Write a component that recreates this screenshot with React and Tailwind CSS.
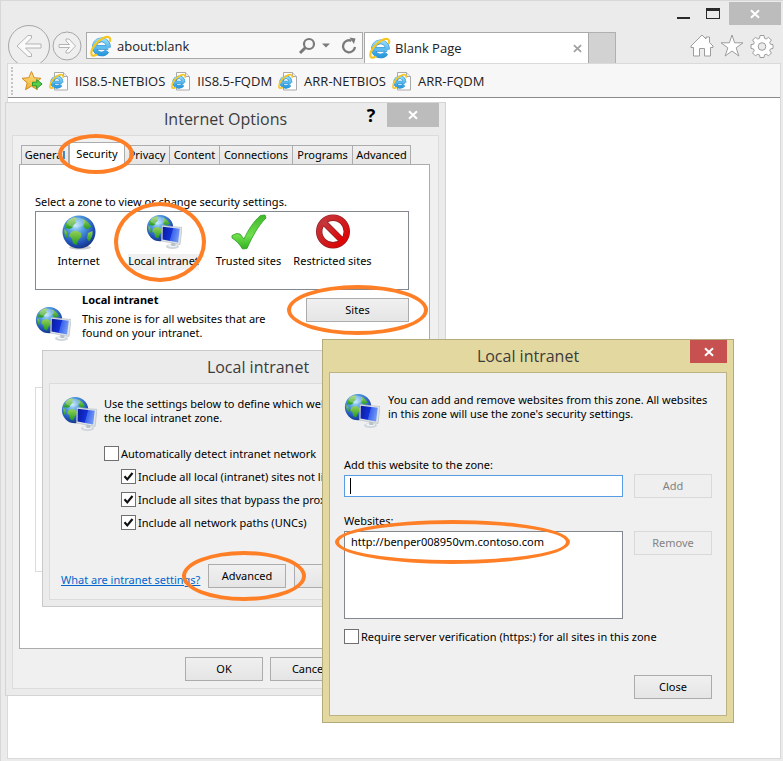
import React from "react";

const UI = "font-['Noto_Sans','DejaVu_Sans_Condensed',sans-serif] text-[11px] leading-[14px] text-black";

function Defs() {
  return (
    <svg width="0" height="0" className="absolute" aria-hidden="true">
      <defs>
        <radialGradient id="ocean" cx="0.4" cy="0.3" r="0.75">
          <stop offset="0" stopColor="#b9e4fb" />
          <stop offset="0.35" stopColor="#4f9be0" />
          <stop offset="0.75" stopColor="#1f4fb4" />
          <stop offset="1" stopColor="#14307c" />
        </radialGradient>
        <linearGradient id="land" x1="0" y1="0" x2="0" y2="1">
          <stop offset="0" stopColor="#9ad25a" />
          <stop offset="1" stopColor="#1f9a1c" />
        </linearGradient>
        <linearGradient id="screen" x1="0" y1="0" x2="1" y2="0.25">
          <stop offset="0" stopColor="#0a1a9a" />
          <stop offset="0.58" stopColor="#1230d8" />
          <stop offset="0.62" stopColor="#3a63ea" />
          <stop offset="1" stopColor="#6e95f4" />
        </linearGradient>
        <linearGradient id="ie" x1="0" y1="0" x2="0" y2="1">
          <stop offset="0" stopColor="#8edbfa" />
          <stop offset="1" stopColor="#2b9be0" />
        </linearGradient>
        <linearGradient id="tick" x1="0" y1="0" x2="0" y2="1">
          <stop offset="0" stopColor="#3fb52c" />
          <stop offset="0.6" stopColor="#6fe04c" />
          <stop offset="1" stopColor="#33b022" />
        </linearGradient>
        <linearGradient id="stop" x1="0" y1="0" x2="1" y2="1">
          <stop offset="0" stopColor="#c23a3f" />
          <stop offset="1" stopColor="#e00000" />
        </linearGradient>
        <linearGradient id="gold" x1="0" y1="0" x2="0" y2="1">
          <stop offset="0" stopColor="#ffe58a" />
          <stop offset="1" stopColor="#f2ab2c" />
        </linearGradient>
      </defs>
    </svg>
  );
}

function IeLogo({ className = "size-[22px]" }) {
  return (
    <svg viewBox="0 0 20 20" className={className} aria-hidden="true">
      <path d="M16.6 11.2H5.2M16.8 11.2A6.4 6.4 0 1 0 15.6 14.6" fill="none" stroke="#2c8ccf" strokeWidth="4.200" />
      <path d="M16.4 11.2H5.2M16.6 11.2A6.4 6.4 0 1 0 15.4 14.4" fill="none" stroke="url(#ie)" strokeWidth="3.200" />
      <path d="M16.4 11.2H6" stroke="#5cbcf0" strokeWidth="2.600" />
      <path d="M18.200 5.400C19 2.400 17 .6 12.600 2.600 6.600 5.400 1.200 12 1.200 16.600c0 2.600 2.200 2.600 4.600 1.400" fill="none" stroke="#f7c623" strokeWidth="2" strokeLinecap="round" />
    </svg>
  );
}

function PageIcon() {
  return (
    <svg viewBox="0 0 20 20" className="size-5 shrink-0" aria-hidden="true">
      <path d="M5.500 1.500h9l4 4v13.500h-13z" fill="#fff" stroke="#a9a9a9" />
      <path d="M14.500 1.500v4h4" fill="#eee" stroke="#a9a9a9" />
      <g transform="translate(0 3) scale(.76)">
        <path d="M16.600 11.200H5.200M16.800 11.200A6.400 6.400 0 1 0 15.600 14.600" fill="none" stroke="#2c8ccf" strokeWidth="4.600" />
        <path d="M16.400 11.200H5.200M16.600 11.200A6.400 6.400 0 1 0 15.400 14.400" fill="none" stroke="url(#ie)" strokeWidth="3.200" />
        <path d="M18.600 4C19 .6 16 0 12 2 6.400 4.800 1.200 11 1.200 16.400c0 2.600 2.200 2.600 4.600 1.400" fill="none" stroke="#f7c623" strokeWidth="2.200" strokeLinecap="round" />
      </g>
    </svg>
  );
}

function AddFavorite() {
  return (
    <svg viewBox="0 0 22 22" className="size-[22px]" aria-hidden="true">
      <path d="M10.500 1.500l2.600 6.200 6.900.6-5.200 4.600 1.500 6.800-5.800-3.600-6 3.600 1.700-6.800L1 8.300l6.800-.6z" fill="url(#gold)" stroke="#d58c22" strokeLinejoin="round" />
      <path d="M11.500 12.200h4.200V9.600l5.400 4.400-5.400 4.600v-2.800h-4.200z" fill="#56cf4b" stroke="#2a9a2c" />
    </svg>
  );
}

const LAND = (
  <g fill="url(#land)">
    <path d="M4 9c2-4 6-6.500 9-6.800l2 1.600-2 2.200 1.500 1.500-3 2.500-1.500 3-3 1-2.500-1-1.500 1z" />
    <path d="M20 3.500c4 1.500 8 5.500 9.500 9l-2.500-.5-1 2.500-3-1-2-3.500 1-3z" />
    <path d="M9 17l5-1.500 5 2.500.5 3.500-3 3.500-2 5-3.500-1.500-1-5-3-2.500z" />
    <path d="M26 18l4.500-2c.5 4-1 8-3.500 10.500l-2-3z" />
    <path d="M2.500 14l2.500 3 .5 5.500-1.500.5c-1.500-3-2-6-1.500-9z" />
  </g>
);

function Globe() {
  return (
    <svg viewBox="0 0 36 36" className="size-9" aria-hidden="true">
      <ellipse cx="19" cy="33.500" rx="11" ry="2" fill="#c9c9c9" />
      <g transform="translate(1 1)">
        <circle cx="17" cy="17" r="16.500" fill="url(#ocean)" />
        {LAND}
        <ellipse cx="14" cy="7.500" rx="9" ry="5" fill="#fff" opacity=".25" />
      </g>
    </svg>
  );
}

function Intranet() {
  return (
    <svg viewBox="0 0 36 36" className="size-9 shrink-0" aria-hidden="true">
      <g transform="translate(.5 .5) scale(.8)">
        <circle cx="17" cy="17" r="16.500" fill="url(#ocean)" />
        {LAND}
        <ellipse cx="14" cy="7.500" rx="9" ry="5" fill="#fff" opacity=".25" />
      </g>
      <ellipse cx="26.500" cy="32.500" rx="6.500" ry="2.400" fill="#cfd6db" />
      <ellipse cx="26.500" cy="31.800" rx="4.500" ry="1.400" fill="#f0f3f5" />
      <path d="M25 28h4l.5 4h-4z" fill="#b9c3ca" />
      <path d="M16 11.500l20 2-2 17-18.500-3.500z" fill="#dfe4e8" stroke="#aeb6bc" strokeWidth=".6" />
      <path d="M16.800 12.800l17 1.900-1.700 13.800-15.600-3z" fill="url(#screen)" />
    </svg>
  );
}

function Trusted() {
  return (
    <svg viewBox="0 0 36 36" className="size-9" aria-hidden="true">
      <path d="M1 21.500l4.500-2 3.500.5 4 5C17 16 23 7 29.500 1.500l4.500-.5 1 3C27 12 21 23 16 34.500l-4.500.5C8.500 30 5 26.500 1 24z" fill="url(#tick)" stroke="#2c9a22" strokeWidth=".8" />
    </svg>
  );
}

function Restricted() {
  return (
    <svg viewBox="0 0 36 36" className="size-9" aria-hidden="true">
      <circle cx="18" cy="17.500" r="13.800" fill="#fff" stroke="#8f1b1f" strokeWidth="6.400" />
      <path d="M8.500 8l19 19" stroke="#8f1b1f" strokeWidth="6.200" />
      <circle cx="18" cy="17.500" r="13.800" fill="none" stroke="url(#stop)" strokeWidth="5.200" />
      <path d="M8.500 8l19 19.010" stroke="url(#stop)" strokeWidth="5" />
    </svg>
  );
}

function Cross({ className }) {
  return (
    <svg viewBox="0 0 10 10" className={className} aria-hidden="true">
      <path d="M1 1.200l8 7.600M9 1.200L1 8.800" stroke="currentColor" strokeWidth="2" />
    </svg>
  );
}

function Ring({ className }) {
  return <span aria-hidden="true" className={`pointer-events-none absolute z-10 rounded-[50%] border-4 border-[#ff7f27] ${className}`} />;
}

function Button({ children, disabled, className = "w-[78px]" }) {
  return (
    <button
      type="button"
      disabled={disabled}
      className={`relative h-6 shrink-0 border border-[#acacac] bg-linear-to-b from-[#f0f0f0] to-[#e5e5e5] disabled:border-[#d9d9d9] disabled:from-[#efefef] disabled:to-[#efefef] disabled:text-[#838383] ${className}`}
    >
      {children}
    </button>
  );
}

function Check({ id, label, checked }) {
  return (
    <div className="flex items-center gap-0.5">
      <span className="relative">
        <input id={id} type="checkbox" defaultChecked={checked} className="peer block size-[15px] appearance-none border border-[#707070] bg-white" />
        <svg viewBox="0 0 15 15" className="pointer-events-none absolute inset-0 hidden size-[15px] peer-checked:block" aria-hidden="true">
          <path d="M3.500 7.200l2.800 3.200 5.200-6.400" fill="none" stroke="#111" strokeWidth="2.200" />
        </svg>
      </span>
      <label htmlFor={id} className="whitespace-nowrap">{label}</label>
    </div>
  );
}

function Dialog({ title, place, frame, inner, head = "h-8", controls, children }) {
  return (
    <section role="dialog" aria-label={title} className={`absolute flex flex-col border px-1.5 pb-1.5 ${place} ${frame} ${UI}`}>
      <header className={`relative flex items-center justify-center ${head}`}>
        <h2 className="font-['Open_Sans',sans-serif] text-base text-[#3c3c3c]">{title}</h2>
        <div className="absolute top-0 right-0 flex">{controls}</div>
      </header>
      <div className={`flex flex-1 flex-col border bg-[#f0f0f0] ${inner}`}>{children}</div>
    </section>
  );
}

const TABS = ["General", "Security", "Privacy", "Content", "Connections", "Programs", "Advanced"];
const ZONES = [
  ["Internet", Globe],
  ["Local intranet", Intranet],
  ["Trusted sites", Trusted],
  ["Restricted sites", Restricted],
];

function InternetOptions() {
  return (
    <Dialog
      title="Internet Options"
      place="left-[5px] top-[102px] w-[441px]"
      frame="border-[#d4d4d4] bg-[#ebebeb]"
      inner="border-[#dcdcdc] pt-1.5 pr-2 pb-[7px] pl-1.5"
      controls={
        <>
          <button type="button" aria-label="Help" className="h-6 w-8 font-['Open_Sans',sans-serif] text-lg leading-6 font-bold">?</button>
          <button type="button" aria-label="Close" className="flex h-6 w-[52px] items-center justify-center bg-[#bcbcbc] text-white">
            <Cross className="size-[10px]" />
          </button>
        </>
      }
    >
      <div role="tablist" className="grid h-[22px] grid-cols-[48px_56px_45px_50px_73px_60px_58px] items-end pl-0.5">
        {TABS.map((t) =>
          t === "Security" ? (
            <button key={t} type="button" role="tab" aria-selected="true" className="relative z-10 -mb-px h-[23px] self-end border border-b-0 border-[#acacac] bg-white">
              {t}
              <Ring className="-inset-y-[9px] -right-2.5 -left-3" />
            </button>
          ) : (
            <button key={t} type="button" role="tab" aria-selected="false" className="h-[19px] border border-b-0 border-l-0 border-[#acacac] bg-linear-to-b from-[#f0f0f0] to-[#e5e5e5] first:border-l">
              {t}
            </button>
          ),
        )}
      </div>
      <div role="tabpanel" className="border border-[#acacac] bg-white pt-[30px] pr-5 pb-[76px] pl-[15px]">
        <p className="h-4">Select a zone to view or change security settings.</p>
        <div role="listbox" aria-label="Zones" className="grid h-[79px] grid-cols-[85px_85px_85px_83px] items-start border border-[#828790] pt-0.5">
          {ZONES.map(([name, Icon]) => (
            <div key={name} role="option" aria-selected={name === "Local intranet"} className="relative flex flex-col items-center gap-1 whitespace-nowrap">
              <Icon />
              <span className={name === "Local intranet" ? "bg-[#f0f0f0] pb-0.5" : "pb-0.5"}>{name}</span>
              {name === "Local intranet" && <Ring className="-top-[12px] right-0 -bottom-[12px] -left-[7px]" />}
            </div>
          ))}
        </div>
        <div className="flex items-start gap-[11px] pt-0.5">
          <div className="pt-[14px]"><Intranet /></div>
          <div className="flex-1">
            <h3 className="mb-1 leading-4 font-bold">Local intranet</h3>
            <p>This zone is for all websites that are<br />found on your intranet.</p>
          </div>
          <div className="pt-1.5">
            <Button className="w-[103px]">
              Sites
              <Ring className="-inset-x-5 -inset-y-[14px]" />
            </Button>
          </div>
        </div>
        <div className="mt-[45px] h-[185px] border border-[#dcdcdc]" />
      </div>
      <div className="mt-2 flex gap-[7px] pl-[166px]">
        <Button>OK</Button>
        <Button>Cancel</Button>
      </div>
    </Dialog>
  );
}

function IntranetSettings() {
  return (
    <Dialog
      title="Local intranet"
      place="left-[42px] top-[350px] w-[432px]"
      frame="border-[#c9c9c9] bg-[#ebebeb]"
      inner="border-[#dcdcdc] px-[11px] pt-3 pb-[11px]"
    >
      <div className="flex gap-[7px]">
        <Intranet />
        <p className="pt-px">Use the settings below to define which websites are included in<br />the local intranet zone.</p>
      </div>
      <div className="mt-[14px] flex flex-col gap-2 pl-[43px]">
        <Check id="auto" label="Automatically detect intranet network" />
        <div className="flex flex-col gap-2 pl-[17px]">
          <Check id="local" checked label="Include all local (intranet) sites not listed" />
          <Check id="proxy" checked label="Include all sites that bypass the proxy server" />
          <Check id="unc" checked label="Include all network paths (UNCs)" />
        </div>
      </div>
      <div className="mt-[34px] flex items-center gap-2">
        <a href="#help" className="w-[139px] pt-2 whitespace-nowrap text-[#0066cc] underline">What are intranet settings?</a>
        <Button>
          Advanced
          <Ring className="-inset-y-[14px] -right-[21px] -left-[27px]" />
        </Button>
        <Button>OK</Button>
      </div>
    </Dialog>
  );
}

function IntranetSites() {
  return (
    <Dialog
      title="Local intranet"
      place="left-[322px] top-[339px] w-[412px]"
      frame="border-[#b3ab7c] bg-[#e3d9a0]"
      inner="border-[#bcb383] px-[14px] pt-5 pb-4"
      controls={
        <button type="button" aria-label="Close" className="flex h-[23px] w-[37px] items-center justify-center bg-[#c75050] text-white">
          <Cross className="size-[10px]" />
        </button>
      }
    >
      <div className="flex gap-2">
        <Intranet />
        <p>You can add and remove websites from this zone. All websites<br />in this zone will use the zone's security settings.</p>
      </div>
      <label htmlFor="site" className="mt-[29px]">Add this website to the zone:</label>
      <div className="mt-0.5 flex items-center gap-[11px]">
        <div className="relative flex-1">
          <input id="site" type="text" className="block h-[22px] w-full border border-[#569de5] bg-white px-1.5 outline-none" />
          <span className="absolute top-[3px] left-1.5 h-4 w-px bg-black" />
        </div>
        <Button disabled>Add</Button>
      </div>
      <h3 className="mt-4">Websites:</h3>
      <div className="mt-[3px] flex items-start gap-[11px]">
        <ul aria-label="Websites" className="h-[88px] flex-1 border border-[#828790] bg-white px-1.5 pt-[3px]">
          <li className="relative w-[195px]">
            http://benper008950vm.contoso.com
            <Ring className="-inset-y-[15px] -right-[24px] -left-4" />
          </li>
        </ul>
        <Button disabled>Remove</Button>
      </div>
      <div className="mt-[10px]">
        <Check id="https" label="Require server verification (https:) for all sites in this zone" />
      </div>
      <div className="mt-[31px] flex justify-end">
        <Button>Close</Button>
      </div>
    </Dialog>
  );
}

const FAVORITES = ["IIS8.5-NETBIOS", "IIS8.5-FQDM", "ARR-NETBIOS", "ARR-FQDM"];

function Browser() {
  return (
    <div className="flex min-h-screen flex-col border-t border-l border-[#d8d8d8] bg-[#ebebeb] font-['Open_Sans',sans-serif] text-[13px] leading-[18px] text-[#222]">
      <div className="flex h-[31px] items-start justify-end pt-px pr-0.5">
        <button type="button" aria-label="Minimize" className="flex h-[23px] w-[30px] justify-center pt-[15px]">
          <span className="h-0.5 w-[13px] bg-[#2a2a2a]" />
        </button>
        <button type="button" aria-label="Maximize" className="flex h-[23px] w-[30px] justify-center pt-1.5">
          <span className="h-[11px] w-[14px] border border-t-[3px] border-[#2a2a2a]" />
        </button>
        <button type="button" aria-label="Close" className="ml-px flex h-[23px] w-[52px] items-center justify-center bg-[#bcbcbc] text-white">
          <Cross className="size-[10px]" />
        </button>
      </div>
      <div className="flex h-[31px] pl-[7px]">
        <div className="flex h-[31px] w-[78px] items-start">
          <svg viewBox="0 0 78 38" className="-mt-[7px] h-[38px] w-[78px]" aria-hidden="true">
            <g fill="#efefef" stroke="#a6a6a6">
              <circle cx="21" cy="21" r="20.500" />
              <circle cx="59" cy="21" r="14" />
            </g>
            <g fill="#fafafa" stroke="#b4b4b4" strokeLinejoin="round">
              <path d="M9 21l11-10.500h3.500v2.500L17.500 19H33v4H17.500l6 6v2.500H20z" />
              <path d="M67.500 21l-6.500-7h-3v2l3.500 3.500H51v3h10.500L58 26v2h3z" />
            </g>
          </svg>
        </div>
        <div className="flex h-[27px] w-[277px] items-center border border-[#a9a9a9] bg-[#f8f8f8] pr-1 pl-[3px]">
          <IeLogo />
          <input aria-label="Address" defaultValue="about:blank" className="ml-[5px] w-0 flex-1 bg-transparent outline-none" />
          <button type="button" aria-label="Search" className="w-[22px]">
            <svg viewBox="0 0 18 18" className="size-[18px]" aria-hidden="true">
              <circle cx="11" cy="7" r="5" fill="none" stroke="#7a7a7a" strokeWidth="2.200" />
              <path d="M7.500 10.500L2 16" stroke="#7a7a7a" strokeWidth="3" />
            </svg>
          </button>
          <button type="button" aria-label="Address list" className="w-5">
            <svg viewBox="0 0 8 5" className="mx-0.5 h-[5px] w-2" aria-hidden="true"><path d="M0 .5h8L4 4.500z" fill="#7a7a7a" /></svg>
          </button>
          <button type="button" aria-label="Refresh">
            <svg viewBox="0 0 18 18" className="size-[18px]" aria-hidden="true">
              <path d="M11.500 3.800A6 6 0 1 0 15 10" fill="none" stroke="#7a7a7a" strokeWidth="2.300" />
              <path d="M9.500.5l6 1-1.500 5.500z" fill="#7a7a7a" />
            </svg>
          </button>
        </div>
        <div className="ml-px flex h-[31px] w-[225px] items-center border border-b-0 border-[#a9a9a9] bg-white pr-1.5 pl-1">
          <IeLogo />
          <span className="ml-1 flex-1">Blank Page</span>
          <button type="button" aria-label="Close tab" className="text-[#a0a0a0]"><Cross className="size-[9px]" /></button>
        </div>
        <button type="button" aria-label="New tab" className="h-[31px] w-[27px] border border-b-0 border-l-0 border-[#b0b0b0] bg-[#d2d2d2]" />
        <div className="ml-auto flex items-start gap-[6px] pt-0.5 pr-[9px]">
          <button type="button" aria-label="Home">
            <svg viewBox="0 0 24 24" className="size-6" fill="#fff" stroke="#9c9c9c" strokeLinejoin="round" aria-hidden="true">
              <path d="M1 12L12 1l4 4V3h3.500v5.500L23 12v1.500h-2.500V22h-6v-7.500h-5V22h-6v-8.500H1z" />
            </svg>
          </button>
          <button type="button" aria-label="Favorites">
            <svg viewBox="0 0 24 24" className="size-6" fill="#fff" stroke="#9c9c9c" aria-hidden="true">
              <path d="M12 1l2.600 7.800h8.400l-6.800 5 2.600 8.200-6.800-5-6.800 5 2.600-8.200-6.800-5h8.400z" />
            </svg>
          </button>
          <button type="button" aria-label="Tools">
            <svg viewBox="0 0 24 24" className="size-6" fill="#fff" stroke="#9c9c9c" strokeLinejoin="round" aria-hidden="true">
              <path d="M10 1.500h4l.5 2.800 1.700.7 2.400-1.700 2.800 2.800-1.700 2.400.7 1.700 2.600.4v3.800l-2.600.6-.7 1.700 1.700 2.300-2.800 2.800-2.400-1.600-1.700.7-.5 2.600h-4l-.5-2.600-1.700-.7-2.400 1.600L2.600 19l1.700-2.300-.7-1.700-2.600-.6v-3.800l2.600-.4.700-1.700L2.600 6.100l2.800-2.800L7.800 5l1.700-.7z" />
              <circle cx="12" cy="12.500" r="3.800" fill="#ebebeb" />
            </svg>
          </button>
        </div>
      </div>
      <div className="mr-0.5 mb-0.5 ml-1.5 flex flex-1 flex-col border border-[#dadada] bg-white">
        <nav className="flex h-[34px] items-center border-b border-[#8a8a8a] bg-[#f7f7f7] pl-[3px]">
          <span className="mr-2 h-7 border-l-2 border-dotted border-[#c4c4c4]" />
          <button type="button" aria-label="Add to Favorites bar" className="mr-1.5"><AddFavorite /></button>
          <div className="flex gap-1.5">
            {FAVORITES.map((f) => (
              <a key={f} href="#fav" className="flex items-center gap-1.5"><PageIcon />{f}</a>
            ))}
          </div>
        </nav>
      </div>
    </div>
  );
}

export default function App() {
  return (
    <main className="relative min-h-screen overflow-hidden">
      <Defs />
      <Browser />
      <InternetOptions />
      <IntranetSettings />
      <IntranetSites />
    </main>
  );
}
